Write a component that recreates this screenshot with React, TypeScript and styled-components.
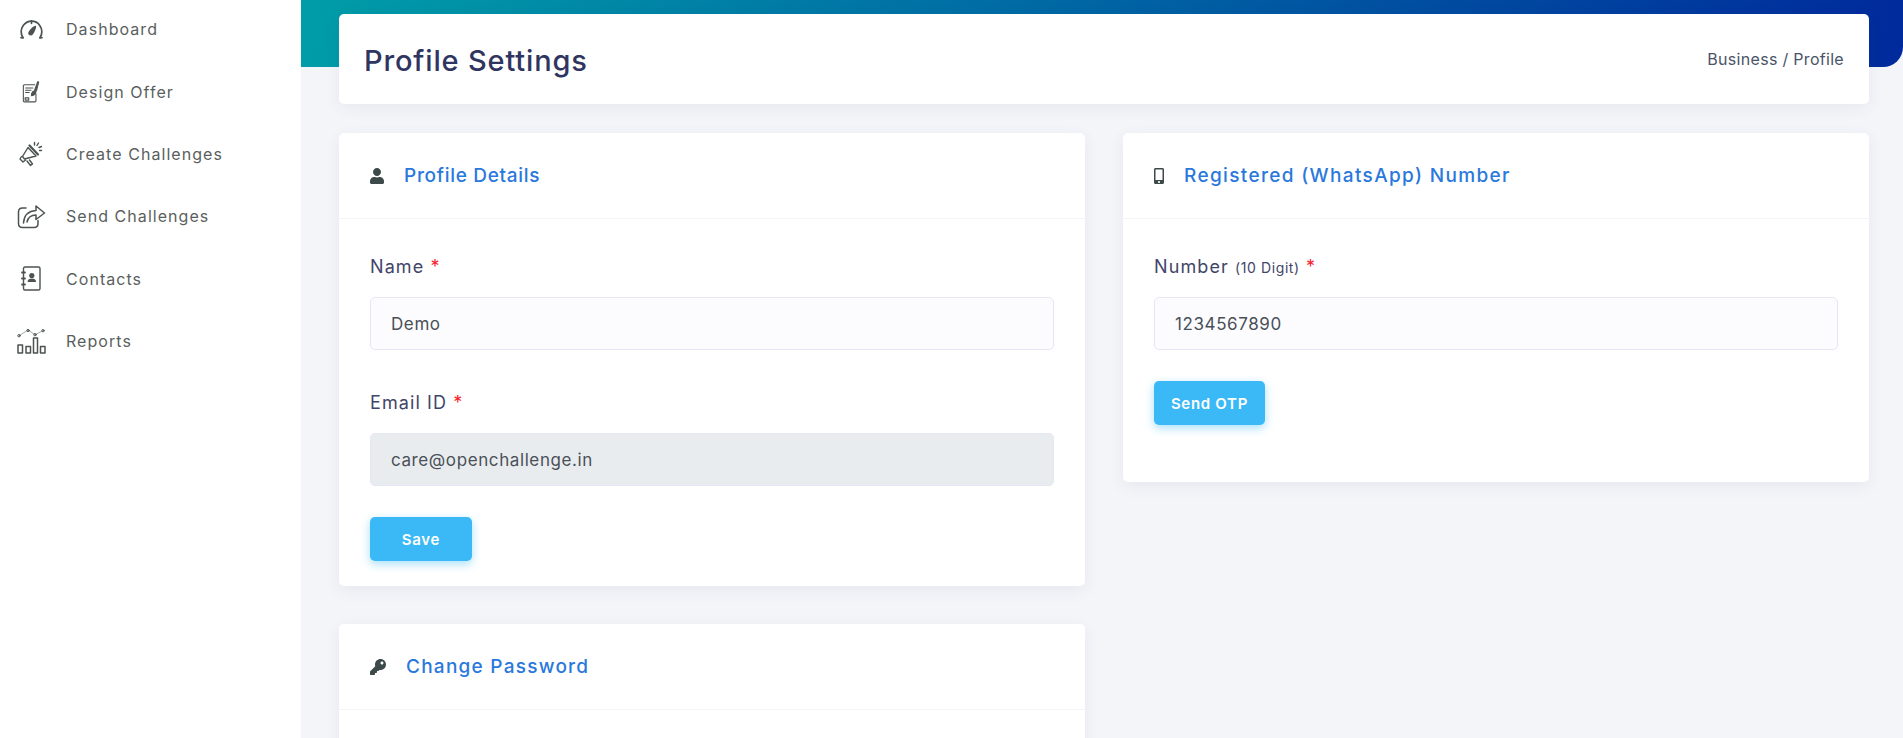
import React from "react"
import styled, { createGlobalStyle } from "styled-components"
import { FaUser, FaKey, FaMobileAlt } from "react-icons/fa"

const GlobalStyle = createGlobalStyle`
  html, body {
    margin: 0;
    height: 100%;
    overflow: hidden;
    background: #f4f5f9;
    font-family: Inter, "Noto Sans", sans-serif;
  }
  #root { height: 100%; }
  * { box-sizing: border-box; }
`

const Layout = styled.div`
  display: flex;
  height: 738px;
  overflow: hidden;
`
const Sidebar = styled.nav`
  flex: 0 0 301px;
  background: #fff;
  margin-top: -2px;
`
const NavItem = styled.a`
  display: flex;
  align-items: center;
  height: 62.4px;
  padding-left: 17px;
  color: #5a5f5e;
  font-size: 16px;
  letter-spacing: 1.05px;
`
const NavIcon = styled.span`
  flex: 0 0 28px;
  min-width: 0;
  margin-right: 21px;
  display: flex;
  align-items: center;
  justify-content: center;
  svg { display: block; flex-shrink: 0; }
`
const Main = styled.main`
  position: relative;
  flex: 1;
  padding: 14px 34px 0 38px;
`
const Banner = styled.div`
  position: absolute;
  top: 0;
  left: 0;
  right: 0;
  height: 67px;
  border-bottom-right-radius: 20px;
  background: linear-gradient(100deg, #009da8 0%, #0070a5 40%, #002a9c 100%);
`
const PageHeader = styled.header`
  position: relative;
  display: flex;
  align-items: center;
  justify-content: space-between;
  height: 90px;
  padding: 0 25px;
  background: #fff;
  border-radius: 5px;
  box-shadow: 0 4px 16px rgba(60, 70, 110, 0.07);
`
const PageTitle = styled.h1`
  margin: 3px 0 0;
  font-size: 29px;
  font-weight: 500;
  color: #2f3560;
  letter-spacing: 0.84px;
`
const Breadcrumb = styled.div`
  font-size: 16px;
  color: #4a5468;
  letter-spacing: 0.3px;
  margin-top: -1px;
`
const Columns = styled.div`
  display: grid;
  grid-template-columns: 746px 746px;
  gap: 38px;
  align-items: start;
  margin-top: 29px;
`
const Stack = styled.div`
  display: flex;
  flex-direction: column;
  gap: 38px;
`
const Card = styled.section`
  background: #fff;
  border-radius: 5px;
  box-shadow: 0 4px 16px rgba(60, 70, 110, 0.07);
`
const CardHead = styled.div`
  display: flex;
  align-items: center;
  height: 86px;
  padding: 0 31px;
  border-bottom: 1px solid #f3f4f8;
`
const HeadIcon = styled.span<{ $width: number; $glyph: number }>`
  flex: 0 0 ${(p) => p.$width}px;
  display: flex;
  align-items: center;
  color: #3c4a4a;
  svg { width: ${(p) => p.$glyph}px; height: 16px; }
`
const CardTitle = styled.h2<{ $tracking: number }>`
  margin: 0;
  font-size: 19px;
  font-weight: 500;
  letter-spacing: ${(p) => p.$tracking}px;
  color: #2a78dc;
`
const CardBody = styled.div<{ $bottom: number }>`
  padding: 35px 31px ${(p) => p.$bottom}px;
`
const Field = styled.div`
  margin-bottom: 31px;
  & + & { margin-top: 40px; }
`
const Label = styled.label`
  display: block;
  margin-bottom: 17px;
  font-size: 18px;
  line-height: 26px;
  letter-spacing: 1.1px;
  color: #414568;
`
const Hint = styled.span`
  font-size: 14px;
  line-height: 1;
  letter-spacing: 0.6px;
`
const Star = styled.span`
  color: #f5222d;
`
const Input = styled.input`
  display: block;
  width: 100%;
  height: 53px;
  padding: 0 20px;
  font: inherit;
  font-size: 17px;
  letter-spacing: 0.6px;
  color: #495057;
  background: #fcfcff;
  border: 1px solid #e6e7f5;
  border-radius: 5px;
  outline: none;
  &:disabled { background: #e9ecef; }
`
const PrimaryButton = styled.button<{ $width: number }>`
  display: block;
  height: 44px;
  width: ${(p) => p.$width}px;
  padding: 0;
  border: 0;
  border-radius: 5px;
  background: #3bb9f6;
  color: #fff;
  font: inherit;
  font-size: 15px;
  font-weight: 600;
  letter-spacing: 0.7px;
  box-shadow: 0 3px 10px rgba(59, 185, 246, 0.45);
`

const line = { fill: "none", stroke: "#4c5352", strokeWidth: 1.4, strokeLinecap: "round", strokeLinejoin: "round" } as const

const GaugeIcon = () => (
  <svg width="25" height="21" viewBox="0 0 26 22" {...line} strokeWidth={1.8}>
    <path d="M4 19.5C1.5 16 1.5 10.500 4.500 6.500 7 3.500 10 2.200 13 2.200s6.500 1.400 8.500 4.300c3 4 3 9.500.5 13" />
    <path d="M13 2v2.500M2 19.500l2.200.3M24 19.500l-2.200.3" />
    <path d="M10.500 15.500c-.8-1.200 3-6 6.500-7.500-.5 3.500-3 8.500-4.500 8.500-.8 0-1.500-.3-2-1z" fill="#4c5352" />
  </svg>
)
const DesignIcon = () => (
  <svg width="18" height="24" viewBox="0 0 20 26" {...line} strokeWidth={1.2}>
    <path d="M14 5H2.500C2 5 1.500 5.500 1.500 6v17c0 .6.4 1 1 1h12c.6 0 1-.4 1-1v-8" />
    <path d="M4 8.500h8M4 11h6M4 13.500h4" />
    <rect x="3.500" y="19.500" width="4" height="2.500" />
    <path d="M17.500 1.500 14 11l2 1 2.500-10z" fill="#4c5352" />
    <path d="M13.500 12c-2 .5-3 2.500-3 5 2 .3 4.500-1 5-4z" fill="#4c5352" />
  </svg>
)
const MegaphoneIcon = () => (
  <svg width="24" height="26" viewBox="0 0 24 26" {...line}>
    <path d="M9 6.500 17 15 5.500 18 3.500 15.500z" />
    <path d="M2.500 15.500 1 18l3 3 2.500-2" />
    <path d="M10.500 4.500 19 13.500" strokeWidth={2.2} />
    <path d="m8 20 3.500 4.500 2-1.500-3-4" />
    <path d="M15.500 1.500v2.500M19.500 2l-1.500 2.500M22.500 5.500l-2.500 1M22.500 9.500h-2" />
  </svg>
)
const ShareIcon = () => (
  <svg width="29" height="25" viewBox="0 0 29 25" {...line} strokeWidth={1.5}>
    <path d="M9 4H5.500C3 4 1.500 5.500 1.500 8v11.500c0 2.500 1.500 4 4 4H17c2.500 0 4-1.500 4-4v-3" />
    <path d="M6.500 19C7 11.500 11 7 19 6.500V2l8.500 7-8.500 6.500V11c-4.500 0-8 2.500-9 7" />
  </svg>
)
const ContactsIcon = () => (
  <svg width="20" height="25" viewBox="0 0 20 25" {...line}>
    <rect x="2.500" y="1" width="16.500" height="23" rx="1.500" />
    <path d="M1 6.500h3M1 12.500h3M1 18.500h3" strokeWidth={1.8} />
    <circle cx="10.800" cy="9.500" r="2.600" fill="#4c5352" stroke="none" />
    <path d="M6.500 16c0-2.500 2-3.500 4.300-3.500s4.300 1 4.300 3.500z" fill="#4c5352" stroke="none" />
  </svg>
)
const ReportsIcon = () => (
  <svg width="29" height="25" viewBox="0 0 29 25" {...line} strokeWidth={1}>
    <path d="m2 6.700 9-5.700 7 4.700 8-4" strokeWidth={0.5} />
    <circle cx="2" cy="6.700" r="1.200" />
    <circle cx="11" cy="1.500" r="1.200" />
    <circle cx="18" cy="5.700" r="1.200" />
    <circle cx="26" cy="1.700" r="1.200" />
    <g strokeWidth={1.5}>
      <rect x="1" y="16" width="4.500" height="8" />
      <rect x="9" y="17.500" width="4.500" height="6.500" />
      <rect x="16.500" y="9" width="4" height="15" />
      <rect x="23.500" y="17.500" width="4.500" height="6.500" />
    </g>
  </svg>
)

const navItems = [
  { label: "Dashboard", icon: <GaugeIcon /> },
  { label: "Design Offer", icon: <DesignIcon /> },
  { label: "Create Challenges", icon: <MegaphoneIcon /> },
  { label: "Send Challenges", icon: <ShareIcon /> },
  { label: "Contacts", icon: <ContactsIcon /> },
  { label: "Reports", icon: <ReportsIcon /> },
]

const App = () => {
  return (
    <Layout>
      <GlobalStyle />
      <Sidebar>
        {navItems.map((item) => (
          <NavItem key={item.label}>
            <NavIcon>{item.icon}</NavIcon>
            {item.label}
          </NavItem>
        ))}
      </Sidebar>
      <Main>
        <Banner />
        <PageHeader>
          <PageTitle>Profile Settings</PageTitle>
          <Breadcrumb>Business / Profile</Breadcrumb>
        </PageHeader>
        <Columns>
          <Stack>
            <Card>
              <CardHead>
                <HeadIcon $width={34} $glyph={14}><FaUser /></HeadIcon>
                <CardTitle $tracking={0.7}>Profile Details</CardTitle>
              </CardHead>
              <CardBody $bottom={25}>
                <Field>
                  <Label>Name <Star>*</Star></Label>
                  <Input defaultValue="Demo" />
                </Field>
                <Field>
                  <Label>Email ID <Star>*</Star></Label>
                  <Input defaultValue="care@openchallenge.in" disabled />
                </Field>
                <PrimaryButton $width={102}>Save</PrimaryButton>
              </CardBody>
            </Card>
            <Card>
              <CardHead>
                <HeadIcon $width={36} $glyph={16}><FaKey /></HeadIcon>
                <CardTitle $tracking={1.25}>Change Password</CardTitle>
              </CardHead>
              <CardBody $bottom={60} />
            </Card>
          </Stack>
          <Card>
            <CardHead>
              <HeadIcon $width={30} $glyph={10}><FaMobileAlt /></HeadIcon>
              <CardTitle $tracking={1.35}>Registered (WhatsApp) Number</CardTitle>
            </CardHead>
            <CardBody $bottom={57}>
              <Field>
                <Label>Number <Hint>(10 Digit)</Hint> <Star>*</Star></Label>
                <Input defaultValue="1234567890" />
              </Field>
              <PrimaryButton $width={111}>Send OTP</PrimaryButton>
            </CardBody>
          </Card>
        </Columns>
      </Main>
    </Layout>
  )
}

export default App
